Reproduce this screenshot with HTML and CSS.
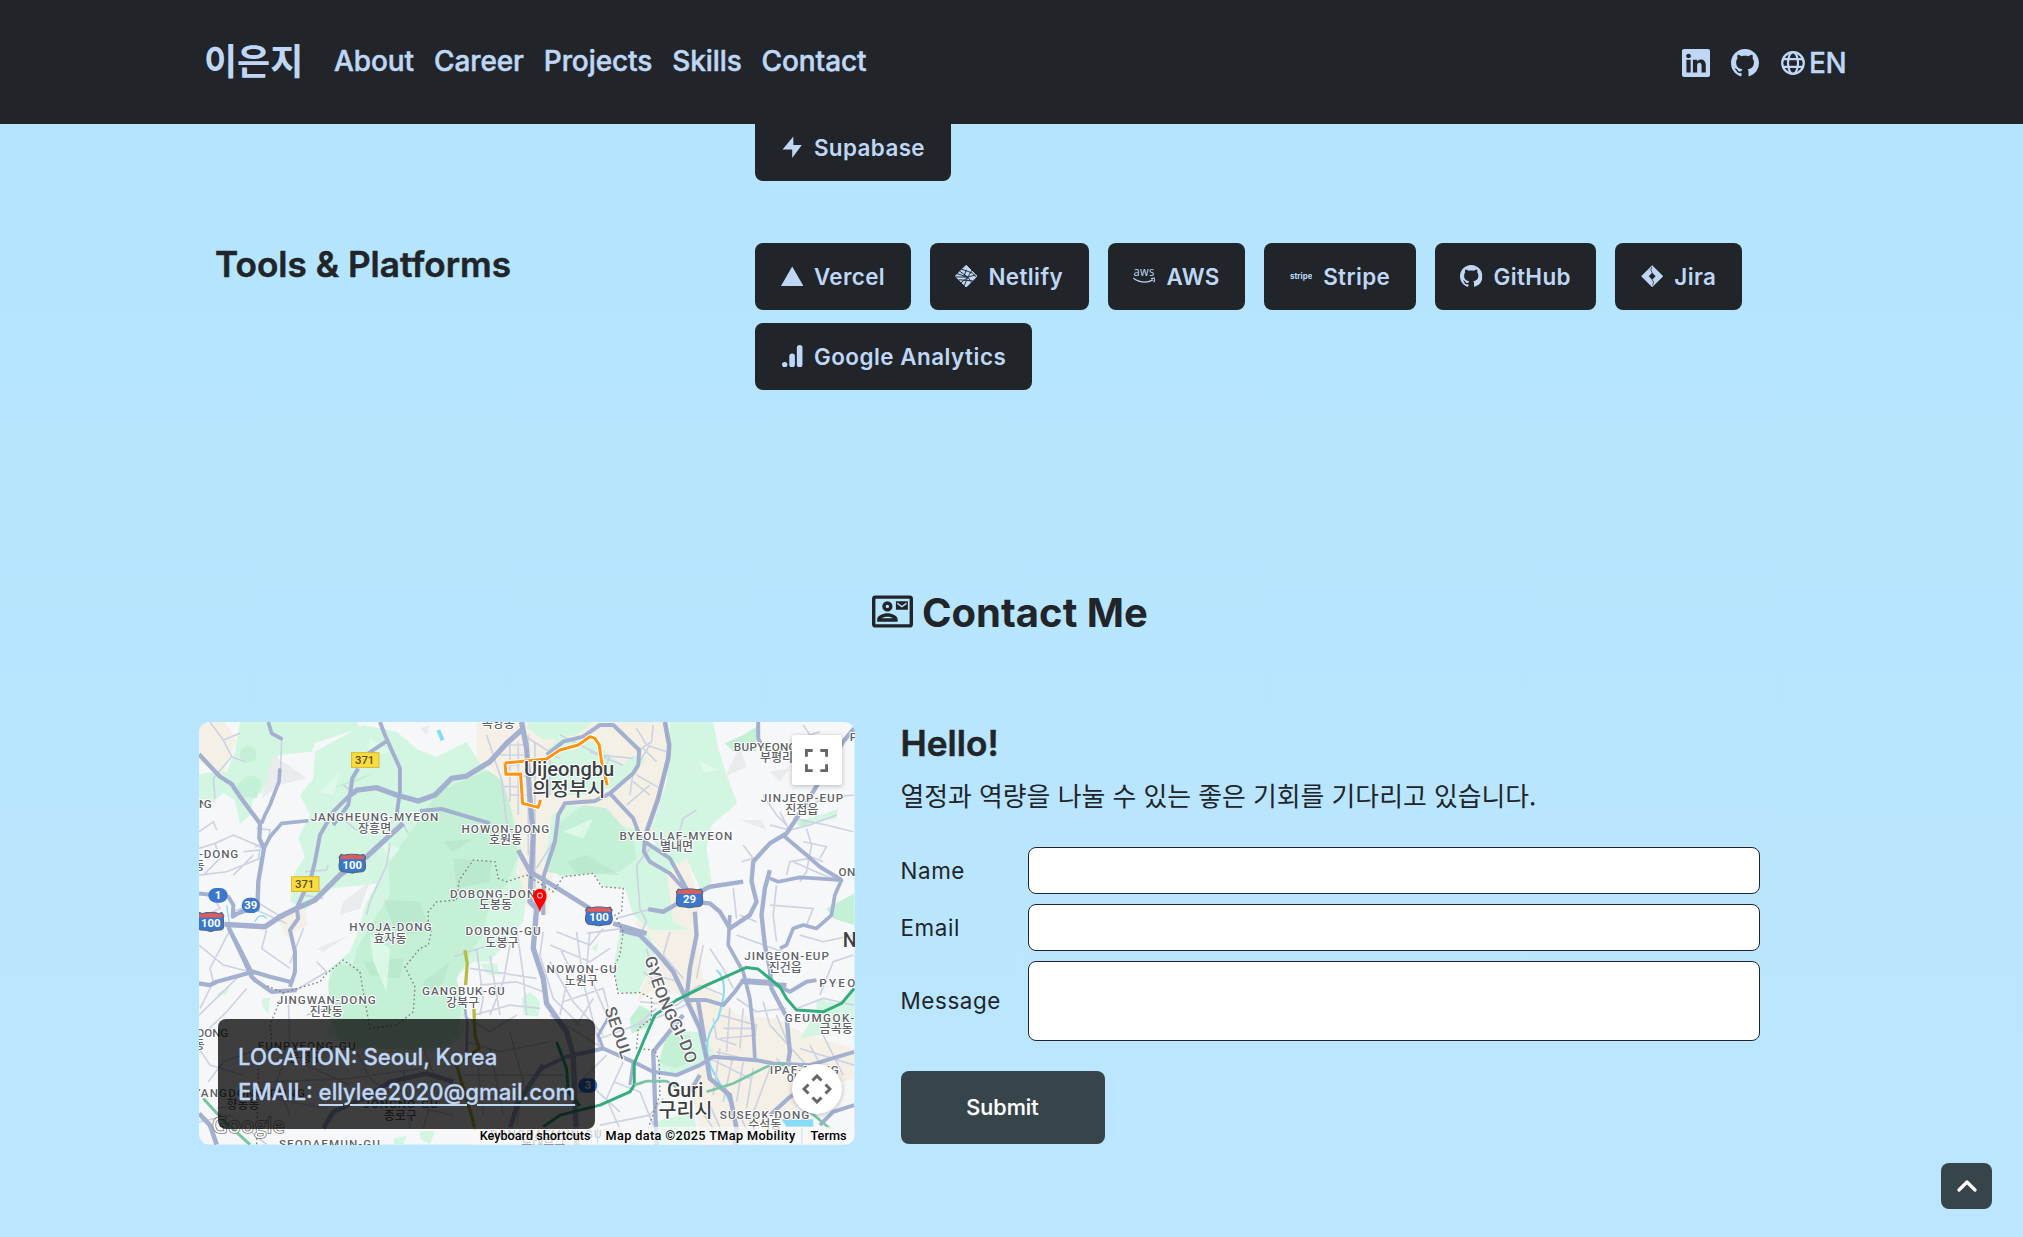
FILE: index.html
```html
<!DOCTYPE html>
<html lang="ko">
<head>
<meta charset="utf-8">
<title>이은지</title>
<link rel="stylesheet" href="styles.css">
</head>
<body>
<svg class="defs" aria-hidden="true">
  <symbol id="github" viewBox="0 0 16 16"><path d="M8 0C3.58 0 0 3.58 0 8c0 3.54 2.29 6.53 5.47 7.59.4.07.55-.17.55-.38 0-.19-.01-.82-.01-1.49-2.01.37-2.53-.49-2.69-.94-.09-.23-.48-.94-.82-1.13-.28-.15-.68-.52-.01-.53.63-.01 1.08.58 1.23.82.72 1.21 1.87.87 2.33.66.07-.52.28-.87.51-1.07-1.78-.2-3.64-.89-3.64-3.95 0-.87.31-1.59.82-2.15-.08-.2-.36-1.02.08-2.12 0 0 .67-.21 2.2.82.64-.18 1.32-.27 2-.27s1.36.09 2 .27c1.53-1.04 2.2-.82 2.2-.82.44 1.1.16 1.92.08 2.12.51.56.82 1.27.82 2.15 0 3.07-1.87 3.75-3.65 3.95.29.25.54.73.54 1.48 0 1.07-.01 1.93-.01 2.2 0 .21.15.46.55.38A8.01 8.01 0 0 0 16 8c0-4.42-3.58-8-8-8"/></symbol>
  <symbol id="shield" viewBox="-42 -30 84 60"><path d="M-33-29Q-26-24-18-27Q0-33 18-27Q26-24 33-29L40-19Q36-12 40 2Q42 20 30 24Q10 24 0 29Q-10 24-30 24Q-42 20-40 2Q-36-12-40-19Z" fill="#3b78cc" stroke="#555e70" stroke-width="3"/><path d="M-32-26Q-26-22-18-25Q0-30 18-25Q26-22 32-26L37-18L36-14H-36L-37-18Z" fill="#e05b5b"/></symbol>
</svg>

<header class="nav">
  <div class="nav-inner">
    <a class="logo">이은지</a>
    <nav class="links"><a>About</a><a>Career</a><a>Projects</a><a>Skills</a><a>Contact</a></nav>
    <div class="social">
      <svg class="soc" viewBox="0 0 16 16"><path d="M0 1.146C0 .513.526 0 1.175 0h13.65C15.474 0 16 .513 16 1.146v13.708c0 .633-.526 1.146-1.175 1.146H1.175C.526 16 0 15.487 0 14.854zm4.943 12.248V6.169H2.542v7.225zm-1.2-8.212c.837 0 1.358-.554 1.358-1.248-.015-.709-.52-1.248-1.342-1.248S2.4 3.226 2.4 3.934c0 .694.521 1.248 1.327 1.248zm4.908 8.212V9.359c0-.216.016-.432.08-.586.173-.431.568-.878 1.232-.878.869 0 1.216.662 1.216 1.634v3.865h2.401V9.25c0-2.22-1.184-3.252-2.764-3.252-1.274 0-1.845.7-2.165 1.193v.025h-.016l.016-.025V6.169h-2.4c.03.678 0 7.225 0 7.225z"/></svg>
      <svg class="soc"><use href="#github"/></svg>
      <span class="lang"><svg class="globe" viewBox="0 0 24 24"><g fill="none" stroke="currentColor" stroke-width="2.2"><circle cx="12" cy="12" r="10.800"/><ellipse cx="12" cy="12" rx="5" ry="10.800"/><path d="M2 8.2H22M2 15.8H22"/></g></svg>EN</span>
    </div>
  </div>
</header>

<main>
  <section class="skills">
    <div class="skill-row first">
      <div class="chips"><span class="chip"><svg viewBox="0 0 24 24"><path d="M13.2.5V9.7H22.3L12 23.5V14.4H1.7Z"/></svg><span>Supabase</span></span></div>
    </div>
    <div class="skill-row">
      <h3>Tools &amp; Platforms</h3>
      <div class="chips">
        <span class="chip vercel"><svg viewBox="0 0 24 24"><path d="M12 1.6 24 22.4H0Z"/></svg><span>Vercel</span></span>
        <span class="chip netlify"><svg viewBox="0 0 24 24"><path d="M12 .3 23.7 12 12 23.7.3 12Z" stroke="currentColor" stroke-linejoin="round"/><path d="M7 4.5 18.5 8.6 23 13M18.8 4.5 13.8 13 17.8 19M2 9.2 13.8 13 22 10.6M.5 12.7 13.8 13 6 19.5M5.5 7 13.8 13 9.5 23M9.5 13 12 5M4 15.8 19 17" fill="none" stroke="#212529" stroke-width="1"/></svg><span>Netlify</span></span>
        <span class="chip aws"><svg viewBox="0 0 24 24"><text x=".6" y="11.6" class="aws-word" textLength="22.6" lengthAdjust="spacingAndGlyphs">aws</text><path d="M.4 14.2Q11 21.6 21.3 15.9" fill="none" stroke="currentColor" stroke-width="1.5"/><path d="M19.4 14.6Q23 13.7 23.4 14.3T22.2 18.4" fill="none" stroke="currentColor" stroke-width="1.2"/></svg><span>AWS</span></span>
        <span class="chip stripe"><svg viewBox="0 0 24 24"><text x="0" y="15" class="stripe-word" textLength="24" lengthAdjust="spacingAndGlyphs">stripe</text></svg><span>Stripe</span></span>
        <span class="chip gh"><svg><use href="#github"/></svg><span>GitHub</span></span>
        <span class="chip jira"><svg viewBox="0 0 24 24"><path fill-rule="evenodd" d="M12 .2 23.8 12 12 23.8.2 12ZM12 8.3 8.3 12 12 15.7 15.7 12Z"/><path d="M12 8.5Q9.2 5.6 11.6 2.2M12 15.5Q14.8 18.4 12.4 21.8" fill="none" stroke="#212529" stroke-width=".8"/></svg><span>Jira</span></span>
        <span class="chip ga"><svg viewBox="0 0 24 24"><circle cx="4" cy="21" r="2.9"/><rect x="8.9" y="9" width="6" height="15" rx="3"/><rect x="17" y="0" width="6" height="24" rx="3"/></svg><span>Google Analytics</span></span>
      </div>
    </div>
  </section>

  <section class="contact">
    <h2><svg viewBox="0 0 24 24"><path fill-rule="evenodd" d="M2 2.6H22Q24 2.6 24 4.6V19.4Q24 21.4 22 21.4H2Q0 21.4 0 19.4V4.6Q0 2.6 2 2.6ZM2 4.6V19.4H22V4.6ZM9 6A3 3 0 0 1 9 12A3 3 0 0 1 9 6ZM9 8A1 1 0 0 0 9 10A1 1 0 0 0 9 8ZM3 18V16.6C3 14.4 6.5 13 9 13S15 14.4 15 16.6V18ZM5.5 16H12.5C11.8 15.4 10.2 15 9 15S6.2 15.4 5.5 16ZM14 6H21V11H14ZM14.8 6.7V7.8L17.5 9.7 20.2 7.8V6.7L17.5 8.6Z"/></svg>Contact Me</h2>
    <div class="contact-grid">
      <div class="map">
        <svg class="map-art" viewBox="27 21 1967 1267" preserveAspectRatio="none">
          <rect x="27" y="21" width="1967" height="1267" fill="#f6f7f8"/>
          <!-- built-up areas -->
          <g fill="#f5f0e5">
            <path d="M27 21H105L140 75L115 130L100 180L27 140Z"/>
            <path d="M860 21H1440L1435 130L1385 340L1430 400L1345 345L1270 325L1210 275L1130 270L1085 300L1065 440L1090 480L1075 600L980 560L985 440L960 290L910 170L860 130Z"/>
            <path d="M1430 470L1490 430L1530 560L1520 660L1540 790L1640 900L1760 910L1850 960L1993 1000V1090L1860 1130L1790 1210L1620 1288H1540L1500 1110L1550 1010L1500 860L1420 810L1340 860L1380 760L1400 690L1330 620L1380 600L1450 620Z"/>
            <path d="M260 610L345 580L355 630L290 665Z"/>
          </g>
          <!-- parks and mountains -->
          <g fill="#d3f6e2">
            <path d="M150 21H500L510 40L375 85L365 110L265 120L235 190L215 235L190 245L180 300L150 328L135 255L100 235L65 265L27 250V178L75 170L110 170L135 110Z"/>
            <path d="M375 110L520 30L620 50L685 105L740 125L830 80L860 130L890 165L940 200L965 290L995 380L980 470L1010 540L1000 620L900 740L850 740L780 800L830 860L820 960L760 1010L560 1000L410 960L440 880L415 820L420 760L480 710L500 660L530 560L560 505L420 520L345 585L300 560L315 470L345 425L325 370L360 300L330 240L370 190Z"/>
            <path d="M1440 21H1570L1585 100L1610 180L1642 265L1565 330L1550 400L1565 500L1540 540L1490 430L1430 470L1450 620L1500 645L1385 645L1330 600L1305 520L1240 515L1210 475L1110 485L1065 440L1085 300L1130 270L1210 275L1270 325L1345 345L1400 410L1385 340L1430 200Z"/>
            <path d="M1060 160L1100 60L1210 80L1300 150L1330 120L1370 135L1290 210L1190 240L1090 240Z"/><path d="M1010 35L1060 75L1160 60L1210 21H1020Z"/>
            <path d="M1290 645L1370 650L1400 700L1385 750L1340 840L1285 830L1270 760Z"/>
            <path d="M1430 950L1540 950L1570 1010L1545 1050L1460 1080L1400 1060Z"/>
            <path d="M1830 970L1880 890L1880 850L1960 870L1993 820V930L1890 960Z"/>
            <path d="M995 850L1020 830L1050 860L1045 905L1000 900Z"/>
            <path d="M870 745L920 745L930 780L895 780Z"/><path d="M1205 700L1225 683L1220 710Z"/><path d="M215 850L240 848L235 895L220 880Z"/><path d="M80 835L120 815L110 835L85 845Z"/>
            <path d="M1390 1220L1510 1190L1530 1288H1400Z"/><path d="M610 1270L650 1262L640 1288H612Z"/><path d="M690 1248L735 1248L720 1288L690 1270Z"/>
            <path d="M1910 295L1945 280L1940 310L1830 335L1815 320Z"/>
          </g>
          <g fill="#c4f0d5">
            <path d="M740 230L895 165L940 200L965 290L985 420L950 510L900 560L880 660L850 700L800 790L815 860L805 960L750 1000L450 1000L430 900L480 810L500 700L560 600L600 540L595 440L700 300Z"/>
            <circle cx="175" cy="118" r="25"/><path d="M140 215Q180 160 215 200L200 250L150 245Z"/>
            <path d="M1070 470L1100 330L1180 270L1250 280L1330 370L1340 430L1290 470L1210 475L1120 480Z"/>
            <path d="M1605 85L1660 60L1700 35L1700 108L1630 110Z"/>
            <path d="M1320 910L1350 870L1385 890L1375 935L1325 955Z"/>
            <path d="M1430 960L1500 960L1520 1030L1460 1060L1410 1045Z"/>
            <path d="M1910 580L1993 535V630L1930 610Z"/>
            <path d="M415 800L440 745L520 760L530 900L470 960L420 920Z"/>
            <path d="M1860 320L1840 312L1825 330L1850 333Z"/>
          </g>
          <g fill="#b5e4c8" opacity=".55">
            <path d="M790 430L905 440L900 500L800 520Z"/><path d="M580 555L690 560L720 650L620 660Z"/><path d="M520 740L640 730L630 790L540 780Z"/><path d="M760 380L850 370L790 410Z"/><path d="M1130 440L1190 420L1290 480L1160 475Z"/><path d="M420 220L560 170L500 200Z"/><path d="M700 800L780 740L760 800L720 840Z"/>
          </g>
          <g fill="#e2fbec" opacity=".8">
            <path d="M540 70L600 110L530 130Z"/><path d="M390 230L450 170L430 240Z"/><path d="M570 380L630 400L600 440Z"/><path d="M1120 350L1210 310L1180 370Z"/><path d="M1530 140L1590 165L1540 175Z"/><path d="M540 660L600 700L590 830L550 740Z"/><path d="M1330 380L1350 330L1350 370Z"/>
          </g>
          <g fill="#e9ebed">
            <path d="M250 120L350 190L270 210L215 250Z"/><path d="M460 560L540 500L510 580L450 600Z"/><path d="M1650 95L1670 155L1605 185Z"/><path d="M1650 315H1715L1730 345Z"/><path d="M380 700L480 660L400 710Z"/><path d="M690 40L720 30L710 60Z"/><path d="M1740 170L1800 160L1770 200Z"/>
          </g>
          <g fill="none" stroke="#86dcf2" stroke-width="6">
            <path d="M745 45L758 76" stroke-width="12"/><path d="M1580 765Q1610 790 1600 850L1585 910Q1530 980 1565 1060L1620 1160"/><path d="M1700 425L1735 390" /><path d="M195 620Q210 590 230 610M110 570L120 640" stroke-width="4"/>
          </g>
          <path d="M1775 1212H1870V1235H1790Z" fill="#86dcf2"/>
          <!-- minor streets -->
          <g fill="none" stroke="#cdd3e2" stroke-width="5">
            <path d="M60 21L100 75L125 125L70 190L75 250M100 75L150 55M125 125L165 140M275 75L272 160M27 350L70 320L80 345M27 400L75 385L130 360L200 390L215 400M75 385L90 430L40 480M27 480L110 470L210 430M130 480L190 420M200 340L240 345L235 380L195 395M160 410L210 405L205 430M345 470L410 465L415 450M340 540L400 550M600 385L590 450L540 560L530 600M460 210L500 240M430 290L500 345L560 300M640 330L655 355M700 260L745 230M210 590L290 625M60 530L90 580L27 610M130 590L200 560L280 610"/>
            <path d="M890 60L935 195L950 320L980 380M940 90H1000M930 120H1000M945 150H990M945 180L1040 185M940 215H1000M960 240H1010M960 70V260M985 80V300M1015 60V420M1035 80V520M1080 100V240M1000 60L1110 130M1110 60L1230 120L1330 130M1200 110L1300 150M1260 120L1240 180M1380 90L1330 170L1320 240M1390 30L1385 80L1340 110M1340 40L1370 90L1430 110M1360 100L1400 140M1330 200L1380 240M1310 270L1380 210M1340 180L1410 220M1470 345L1480 310L1520 285M1040 460L1090 380M1380 400L1340 450L1350 580L1370 620L1350 660M1300 640L1190 655M1390 580L1280 610"/>
            <path d="M1840 30L1860 60L1890 50M1720 240L1760 300L1790 330M1740 330L1800 345L1860 330L1940 300M1770 290L1800 350L1780 370M1800 270L1820 310M1810 310L1910 330L1990 350M1830 290L1900 250L1993 240M1850 340L1865 390L1850 470L1830 500M1820 400L1850 420L1900 440M1840 380L1910 395L1890 430M1810 440L1900 480L1960 500M1790 480L1800 440L1860 430M1660 390L1690 430L1655 440M1760 510L1750 600L1760 680M1630 520L1640 610M1740 570L1870 580L1850 630M1640 660L1830 730M1650 600L1700 620"/>
            <path d="M27 690L100 750L180 770M27 900L150 780M27 970L110 890L170 820M120 645L60 760L70 800L30 880M230 645L215 700L300 760M300 745L340 640M310 830L410 770L380 740M350 900L460 860M27 1000L60 1050L160 1080M55 1100L100 1040L240 990L400 1010M295 850L300 1000L260 1100L300 1200M80 1180L250 1150L410 1180M240 1100L480 1090L690 1060M350 1050L480 1110M500 1010L540 1090L620 1150M600 1100L700 1180L790 1200M700 1000L740 1100L700 1240M640 1060L660 1240M27 1220L120 1200L230 1288M820 900L900 950L980 900M830 980L930 1010L1080 980M860 1020L880 1200M900 1000L940 1200M960 950L1000 1100L980 1230M800 1150L1180 1130M820 1080L1120 1080"/>
            <path d="M790 725L900 690L985 640M840 760L1040 790M860 700L880 850L870 900M900 720L930 900M960 690L940 800L900 900M980 640L1000 780L1010 900M1060 650L1050 720L1090 850L1170 930M870 810L980 800L1060 830M850 900L960 870L1050 880M1080 690L1200 740L1260 700M1080 740L1150 860L1240 960M1100 650L1200 690L1240 640M1110 700L1140 760L1110 900M1160 650L1180 800L1230 1000M1200 650L1190 760L1250 900M1120 860L1240 820L1260 900M1160 930L1210 850M1230 970L1340 930L1400 880M1080 900L1240 1000M1250 1020L1180 1090L1290 1190M1300 1040L1250 1150L1310 1288M1230 1230L1380 1200L1420 1150M1270 1100L1350 1130L1390 1230"/>
            <path d="M1370 700L1390 780L1470 800M1360 770L1440 830M1440 650L1420 720L1480 790M1520 680L1500 750M1350 860L1460 870L1500 840M1340 930L1420 900L1510 860M1570 910L1580 970L1640 990M1590 900L1700 930L1690 990M1600 940H1700M1590 970L1700 960M1620 880L1610 1010M1660 880L1650 1000M1580 1010L1700 1040M1560 1030L1680 1090M1590 1000L1570 1140M1630 1020L1600 1160M1660 1040L1640 1160M1690 1060L1670 1180M1740 1060L1680 1220M1600 840L1530 810L1500 830M1640 850L1700 890L1790 880M1720 860L1740 930L1850 1050M1760 900L1800 1000M1830 1000L1993 1050M1860 990L1920 1100M1900 960L1960 1080M1760 1030L1850 1130M1650 1200L1690 1288M1560 1170L1600 1260M1530 1180L1570 1240"/>
            <path d="M1990 720L1930 740L1890 840M1830 660L1900 680L1993 660M1560 700L1600 760L1630 820M1540 690L1520 790M1820 880L1900 850L1993 870"/>
          </g>
          <!-- highways -->
          <g fill="none" stroke="#a4b0d0" stroke-width="14" stroke-linejoin="round">
            <path d="M27 118L90 185L125 207L150 245L210 325L208 370L222 400L205 500L202 590" stroke-width="13"/>
            <path d="M235 21L245 55L278 73M270 160L267 200L240 270L225 300L215 325M222 400L240 365L275 325L355 317" stroke-width="11"/>
            <path d="M480 240L500 225L560 218L620 240L685 258L735 240L785 190L830 183L900 140L950 85L995 45" stroke-width="16"/>
            <path d="M570 21L585 60L605 105L630 160V230L620 300M588 80L535 115M505 160L487 190L480 240L430 290L390 360L375 440L365 480L320 580L325 610L300 645L315 710V770L300 815" stroke-width="12"/>
            <path d="M480 235L475 270L430 330M690 288L755 282L900 325" stroke-width="12"/>
            <path d="M640 325L590 370L530 425L450 480L375 555L320 580L270 605L225 635L105 628" stroke-width="16"/>
            <path d="M27 535L115 545L130 570L128 605L160 585M128 600L190 580" stroke-width="12"/>
            <path d="M115 635L160 730L185 785L195 795L245 830L320 825M27 805L60 810L80 800L190 770L240 785L300 800" stroke-width="13"/>
            <path d="M120 645L150 700L190 780" stroke-width="10"/>
            <path d="M995 21L1010 100L1020 250L1030 360L1020 560L1040 580L1030 700L1060 790L1070 865L1130 950L1150 1020L1160 1288" stroke-width="16"/>
            <path d="M1060 600L1062 480L1095 380L1105 300L1125 265L1215 258L1260 235L1330 175L1345 150L1348 105L1270 30L1230 30L1180 65L1120 80L1070 120" stroke-width="12"/>
            <path d="M1260 235L1330 310L1345 350L1365 380L1440 430L1495 530M1365 375L1362 410L1380 440L1440 475L1490 530" stroke-width="12"/>
            <path d="M1425 21L1438 90L1435 130L1405 250L1370 350" stroke-width="14"/>
            <path d="M985 405L1020 470L1080 505L1200 580M1270 625L1370 655" stroke-width="14"/>
            <path d="M1660 500L1560 515L1500 545L1420 590L1375 582" stroke-width="13"/>
            <path d="M1500 560L1560 565L1590 590L1620 640L1680 600L1700 560L1685 500L1690 440L1740 385L1790 355L1820 310L1870 230L1960 80L1993 40" stroke-width="13"/>
            <path d="M1740 465L1725 520L1715 600L1725 690L1740 760L1745 820L1790 905L1800 1010L1795 1040" stroke-width="13"/>
            <path d="M1740 490L1765 500L1830 487L1880 490L1955 495L1935 540L1925 600L1880 640L1840 630L1810 640L1790 690L1770 700" stroke-width="11"/>
            <path d="M1785 365L1850 420L1890 455L1955 495M1705 21V70L1720 100" stroke-width="12"/>
            <path d="M1620 600L1615 690L1660 770L1680 850L1690 940L1695 1030" stroke-width="11"/>
            <path d="M1290 645L1350 660L1400 710L1450 770L1490 855L1530 940L1550 1030L1560 1090L1620 1140L1640 1240L1635 1288" stroke-width="14"/>
            <path d="M1515 590L1520 660L1500 760L1490 850M1525 860L1545 980" stroke-width="13"/>
            <path d="M1490 855L1550 855L1600 870L1635 830L1660 795L1740 800L1800 830L1850 800L1880 795M1650 800L1790 810" stroke-width="12"/>
            <path d="M1400 1288L1395 1150L1390 1010L1430 960L1480 900" stroke-width="13"/>
            <path d="M1055 1060L1130 1025L1240 1000L1330 1040L1390 1070L1460 1080L1530 1050L1570 1025L1700 1035L1750 1045L1860 1050L1993 1010" stroke-width="12"/>
            <path d="M1240 1000L1225 960L1260 900M1330 1040L1320 1110" stroke-width="9"/>
            <path d="M400 1240L430 1190L540 1140L600 1100L710 1075L790 1100M960 1240L985 1160L1060 1050M27 1195L60 1230L80 1288" stroke-width="14"/>
            <path d="M1740 1200L1795 1150L1850 1110M1890 1230L1930 1190L1993 1170M1530 1080L1500 1130" stroke-width="12"/>
            <path d="M825 880L832 925L830 1010" stroke-width="8"/>
          </g>
          <g fill="none" stroke="#71799a" stroke-width="1.5" opacity=".35"><path d="M1010 100L1020 250L1030 360L1020 560M1425 21L1438 90L1435 130L1405 250L1370 350M630 160V230L620 300M1490 855L1530 940L1550 1030"/></g>
          <!-- district boundaries -->
          <g fill="none" stroke="#7c827e" stroke-width="4" stroke-dasharray="5 8">
            <path d="M715 645L715 590L740 560L800 555L808 495L850 435L915 440L925 490L950 500L1010 480L1090 530L1120 485L1210 475L1235 515L1300 520L1295 590L1275 600L1300 650L1290 720L1270 760L1285 835L1350 832L1385 850L1385 910L1345 940L1340 1000L1395 1005L1408 1040L1410 1140L1375 1240"/>
            <path d="M725 645L715 690L690 700L645 755L675 815L670 890L620 930L540 940L520 830L510 770L460 735L410 775L390 800L280 833L225 810M280 833L260 880L240 930L245 980L205 1050L200 1288"/>
          </g>
          <!-- rail -->
          <g fill="none" stroke-linejoin="round">
            <path d="M945 144L1070 132L1110 105L1165 90L1200 65L1215 70L1228 90L1235 140L1252 210M945 144L948 178L992 177L998 265L1045 277L1052 255" stroke="#fff" stroke-width="15"/>
            <path d="M945 144L1070 132L1110 105L1165 90L1200 65L1215 70L1228 90L1235 140L1252 210M945 144L948 178L992 177L998 265L1045 277L1052 255" stroke="#ff9310" stroke-width="9"/>
            <path d="M825 705L832 745L827 810M852 880L855 960L868 1000L800 1050L850 1220L855 1245" stroke="#b8bb43" stroke-width="10"/>
            <path d="M1060 1235L1110 1200L1230 1170L1320 1130L1333 1110V1045L1360 980L1395 900L1460 855L1550 810L1630 775L1670 757L1705 762L1770 815L1790 850L1820 885L1900 890L1955 865L1993 820M1100 980L1130 1060L1135 1130L1170 1172" stroke="#33ad7f" stroke-width="9"/>
            <path d="M1333 1110L1370 1098L1430 1098L1460 1115M1550 1130L1630 1105L1730 1055L1790 1045M1860 1190L1920 1240" stroke="#7cc6a7" stroke-width="8"/>
            <path d="M40 1150L100 1215L180 1288" stroke="#74c6a0" stroke-width="9"/>
          </g>
          <!-- place names -->
          <g class="lbl">
            <text x="27" y="278" textLength="38">NG</text><text x="27" y="430" textLength="118">-DONG</text>
            <text x="362" y="319" textLength="383">JANGHEUNG-MYEON</text><text x="815" y="354" textLength="263">HOWON-DONG</text>
            <text x="780" y="549" textLength="283">DOBONG-DONG</text><text x="478" y="648" textLength="247">HYOJA-DONG</text>
            <text x="827" y="660" textLength="225">DOBONG-GU</text><text x="1632" y="108" textLength="235">BUPYEONG-RI</text>
            <text x="1713" y="262" textLength="247">JINJEOP-EUP</text><text x="1289" y="374" textLength="338">BYEOLLAE-MYEON</text>
            <text x="1946" y="482" textLength="50">ON</text><text x="1980" y="77">P</text>
            <text x="260" y="867" textLength="297">JINGWAN-DONG</text><text x="696" y="841" textLength="248">GANGBUK-GU</text>
            <text x="203" y="1006" textLength="294">EUNPYEONG-GU</text><text x="20" y="967" textLength="95">DONG</text>
            <text x="-18" y="1147" textLength="363">HYANGDONG-DONG</text><text x="520" y="1180" textLength="223">JONGNO-GU</text>
            <text x="267" y="1300" textLength="303">SEODAEMUN-GU</text><text x="1070" y="775" textLength="210">NOWON-GU</text>
            <text x="1663" y="735" textLength="254">JINGEON-EUP</text><text x="1888" y="816" textLength="108">PYEO</text>
            <text x="1785" y="920" textLength="208">GEUMGOK-</text><text x="1740" y="1076" textLength="207">IPAE-DONG</text>
            <text x="1590" y="1211" textLength="268">SUSEOK-DONG</text><text x="900" y="1270" textLength="335">DONGDAEMUN-GU</text>
          </g>
          <g class="lbl ko">
            <text x="27" y="466">동</text><text x="554" y="353">장흥면</text><text x="947" y="387">호원동</text><text x="917" y="583">도봉동</text><text x="600" y="683">효자동</text><text x="936" y="695">도봉구</text><text x="925" y="39">녹양동</text><text x="1760" y="142">부평리</text><text x="1836" y="296">진접읍</text><text x="1460" y="407">별내면</text><text x="409" y="902">진관동</text><text x="818" y="875">강북구</text><text x="347" y="1042">은평구</text><text x="27" y="1003">동</text><text x="159" y="1182">향동동</text><text x="631" y="1214">종로구</text><text x="1174" y="809">노원구</text><text x="1786" y="770">진건읍</text><text x="1939" y="955">금곡동</text><text x="1840" y="1108">이패동</text><text x="1725" y="1243">수석동</text><text x="1060" y="1302">동대문구</text>
          </g>
          <g class="lbl city">
            <text x="1002" y="182" textLength="271" lengthAdjust="spacingAndGlyphs">Uijeongbu</text><text x="1137" y="244" text-anchor="middle" textLength="220" lengthAdjust="spacingAndGlyphs">의정부시</text>
            <text x="1431" y="1145" textLength="109" lengthAdjust="spacingAndGlyphs">Guri</text><text x="1487" y="1206" text-anchor="middle" textLength="162" lengthAdjust="spacingAndGlyphs">구리시</text>
            <text x="1959" y="697" class="big">N</text>
          </g>
          <g class="lbl region">
            <text transform="translate(1243 882) rotate(71)" textLength="160" lengthAdjust="spacingAndGlyphs">SEOUL</text>
            <path id="curve" d="M1364 728Q1395 850 1440 930T1492 1062" fill="none" stroke="none"/>
            <text><textPath href="#curve" textLength="344" lengthAdjust="spacingAndGlyphs">GYEONGGI-DO</textPath></text>
          </g>
          <!-- route markers -->
          <g class="route">
            <rect x="485" y="113" width="82" height="44" fill="#fbdc3f" stroke="#d8b830" stroke-width="3"/><text x="524" y="147" class="dark">371</text>
            <rect x="305" y="485" width="82" height="44" fill="#fbdc3f" stroke="#d8b830" stroke-width="3"/><text x="344" y="518" class="dark">371</text>
            <rect x="55" y="519" width="58" height="44" rx="22" fill="#3b78cc"/><text x="84" y="552">1</text>
            <rect x="155" y="548" width="55" height="46" rx="23" fill="#3b78cc"/><text x="182" y="583">39</text>
            <rect x="1165" y="1089" width="57" height="44" rx="22" fill="#2e75dc"/><text x="1194" y="1122">3</text>
            <use href="#shield" x="445" y="416" width="84" height="60"/><text x="487" y="462">100</text>
            <use href="#shield" x="20" y="591" width="84" height="60"/><text x="62" y="637">100</text>
            <use href="#shield" x="1185" y="574" width="84" height="60"/><text x="1227" y="619">100</text>
            <use href="#shield" x="1457" y="520" width="84" height="60"/><text x="1499" y="564">29</text>
          </g>
          <path d="M1050 592C1046 570 1030 562 1030 541A20 20 0 0 1 1070 541C1070 562 1054 570 1050 592Z" fill="#f00"/><circle cx="1050" cy="541" r="7.500" fill="none" stroke="#ffc9c9" stroke-width="3"/>
          <rect x="840" y="1235" width="1154" height="53" fill="#f8f8f8" opacity=".72"/>
          <path d="M1223 1238V1285M1836 1238V1285" stroke="#b7cbe0" stroke-width="2"/>
          <text x="66" y="1254" class="gword" textLength="218">Google</text>
        </svg>
        <div class="info"><div>LOCATION: Seoul, Korea</div><div>EMAIL: <a>ellylee2020@gmail.com</a></div></div>
        <div class="fullscreen"><svg viewBox="0 0 24 24"><path d="M1.500 8V1.500H8M16 1.500H22.500V8M22.500 16V22.500H16M8 22.500H1.500V16" fill="none" stroke="#666" stroke-width="3"/></svg></div>
        <div class="camera"><svg viewBox="-15 -15 30 30"><path d="M-4.500-8.500L0-13 4.500-8.500M-4.500 8.500L0 13 4.500 8.500M-8.500-4.500L-13 0-8.500 4.500M8.500-4.500L13 0 8.500 4.500" fill="none" stroke="#666" stroke-width="3"/></svg></div>
        <div class="credits"><span>Keyboard shortcuts</span><span class="data">Map data ©2025 TMap Mobility</span><span>Terms</span></div>
      </div>

      <form class="form">
        <h3>Hello!</h3>
        <p>열정과 역량을 나눌 수 있는 좋은 기회를 기다리고 있습니다.</p>
        <div class="fields">
          <label for="name">Name</label><input id="name">
          <label for="email">Email</label><input id="email">
          <label for="message">Message</label><textarea id="message"></textarea>
        </div>
        <button type="button">Submit</button>
      </form>
    </div>
  </section>
</main>
<a class="top"><svg viewBox="0 0 20 12"><path d="M2 10 10 2 18 10" fill="none" stroke="#fff" stroke-width="3.200" stroke-linecap="round" stroke-linejoin="round"/></svg></a>
</body>
</html>
```
FILE: styles.css
```css
* { box-sizing: border-box; }
html, body { height: 100%; }
body {
  margin: 0;
  overflow: hidden;
  font-family: Inter, "Noto Sans CJK KR", sans-serif;
  color: #212529;
  background: linear-gradient(#b3e5fc, #bce6ff);
}
h2, h3, p { margin: 0; }
.defs { position: absolute; width: 0; height: 0; }

.nav { position: fixed; inset: 0 0 auto; height: 124px; background: #212529; color: #bfd7f5; z-index: 2; }
.nav-inner { display: flex; align-items: center; height: 100%; padding: 0 176.500px 0 204px; }
.logo { font-size: 36px; font-weight: 600; line-height: 50px; width: 130px; }
.links { display: flex; gap: 20px; font-size: 28px; font-weight: 500; line-height: 34px; letter-spacing: -.1px; -webkit-text-stroke: .5px currentColor; position: relative; top: -1px; }
.social { margin-left: auto; display: flex; align-items: center; gap: 21px; padding-top: 2px; }
.soc { width: 28px; height: 28px; fill: currentColor; }
.lang { display: flex; align-items: center; gap: 4px; margin-left: 1px; font-size: 28px; font-weight: 500; line-height: 34px; letter-spacing: -.3px; -webkit-text-stroke: .3px currentColor; }
.globe { width: 24px; height: 24px; }

.skills { display: flex; flex-direction: column; gap: 61.500px; padding: 114px 260px 0 215px; }
.skill-row { display: grid; grid-template-columns: 540px 1fr; }
.first .chips { grid-column: 2; }
.skill-row h3, .form h3 { font-size: 35.200px; font-weight: 600; line-height: 43px; -webkit-text-stroke: .5px currentColor; }
.chips { display: flex; flex-wrap: wrap; gap: 13px 19px; }
.chip { display: flex; align-items: center; gap: 11px; height: 67px; padding: 0 25.500px; border-radius: 8px; background: #212529; color: #bfd7f5; font-size: 22.4px; font-weight: 600; letter-spacing: .4px; }
.chip svg { width: 22.4px; height: 22.4px; fill: currentColor; }
.ga span { letter-spacing: .5px; }
.aws-word { font: 500 13px "Open Sans", sans-serif; }
.stripe-word { font: 700 9px Inter, sans-serif; letter-spacing: 0; }

.contact { padding: 192.500px 0 0 199px; }
.contact h2 { display: flex; align-items: center; gap: 9px; height: 60px; padding-left: 673px; font-size: 40px; font-weight: 700; }
.contact h2 svg { width: 41px; height: 41px; fill: currentColor; position: relative; top: -1px; }
.contact-grid { display: grid; grid-template-columns: 655.500px 859px; gap: 46px; padding-top: 80px; }
.map { position: relative; height: 422.500px; overflow: hidden; border-radius: 11px; }
.map-art { display: block; width: 100%; height: 100%; }
.lbl text { font: 500 35px Roboto, sans-serif; fill: #5f6368; stroke: #fff; stroke-width: 6px; stroke-linejoin: round; paint-order: stroke; }
.lbl.ko text { font: 500 36px "Noto Sans CJK KR", sans-serif; text-anchor: middle; }
.lbl.city text { font: 500 59px Roboto, "Noto Sans CJK KR", sans-serif; fill: #3c4043; }
.lbl.region text { font: 500 49px Roboto, sans-serif; }
.route text { font: 700 34px Roboto, sans-serif; fill: #fff; text-anchor: middle; }
.route .dark { font-weight: 500; fill: #5b5323; }
.gword { font: 500 64px "Open Sans", sans-serif; fill: #fff; stroke: #777; stroke-width: 5px; paint-order: stroke; }
.info { position: absolute; left: 19px; top: 297px; width: 377px; height: 110px; padding: 20px 0 0 20px; border-radius: 8px; background: rgba(0, 0, 0, .75); color: #bfd7f5; font-size: 22.200px; font-weight: 500; line-height: 35px; white-space: nowrap; -webkit-text-stroke: .3px currentColor; }
.info a { text-decoration: underline; text-underline-offset: 4px; text-decoration-thickness: 1.500px; }
.fullscreen, .camera { position: absolute; right: 13px; width: 50px; height: 50px; display: grid; place-items: center; background: #fff; box-shadow: 0 1px 5px rgba(0, 0, 0, .25); }
.fullscreen { top: 13px; border-radius: 2px; }
.fullscreen svg { width: 23px; height: 23px; }
.camera { bottom: 31px; border-radius: 50%; }
.camera svg { width: 30px; height: 30px; }
.credits { position: absolute; right: 8px; bottom: 0; display: flex; gap: 15px; font: 500 12.700px/18px Roboto, sans-serif; color: #000; }
.credits .data { letter-spacing: .37px; }

.form p { margin-top: 8px; font-family: "Noto Sans CJK KR", sans-serif; font-size: 25.850px; line-height: 44px; }
.fields { display: grid; grid-template-columns: 127px 1fr; row-gap: 10px; align-items: center; margin-top: 29.500px; font-size: 22.400px; letter-spacing: .6px; }
.fields input, .fields textarea { display: block; width: 100%; height: 47px; margin: 0; border: 1px solid #212529; border-radius: 8px; background: #fff; resize: none; }
.fields textarea { height: 80px; }
.form button { display: block; width: 204px; height: 73px; margin-top: 30px; border: 0; border-radius: 8px; background: #37444a; color: #fff; font: 500 21.600px Inter, sans-serif; -webkit-text-stroke: .2px currentColor; }
.top { position: fixed; left: 1941px; top: 1162.500px; width: 51px; height: 46px; display: grid; place-items: center; border-radius: 8px; background: #37444a; }
.top svg { width: 20px; height: 12px; }
```
